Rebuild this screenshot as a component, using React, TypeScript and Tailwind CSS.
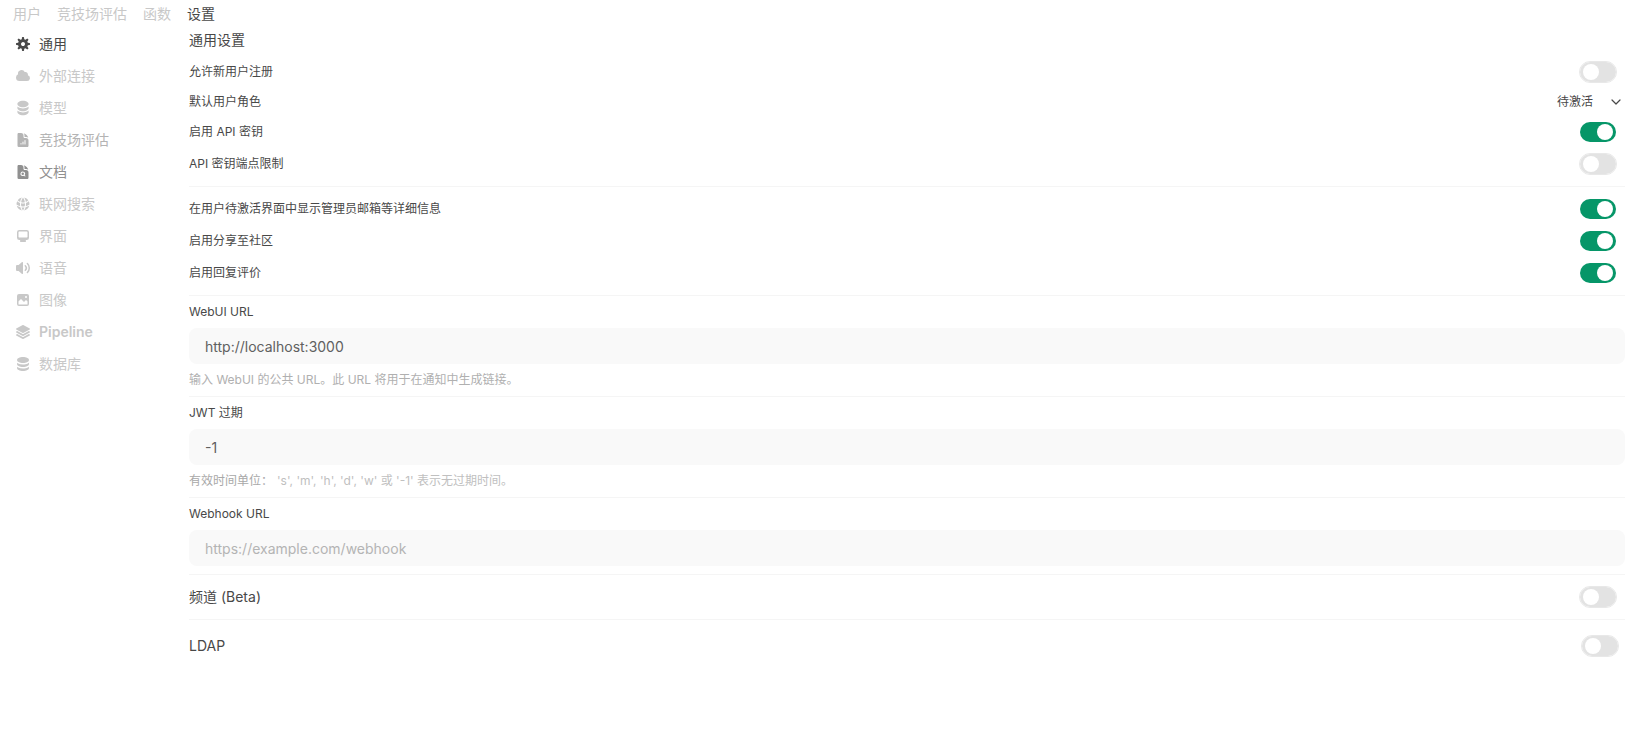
import { useState } from "react";
import type { ReactNode } from "react";
import {
  HiDocumentChartBar,
  HiDocumentMagnifyingGlass,
  HiGlobeAlt,
  HiMiniCircleStack,
  HiSquare3Stack3D,
} from "react-icons/hi2";

function Icon16({ paths }: { paths: string[] }) {
  return (
    <svg viewBox="0 0 16 16" className="h-4 w-4" fill="currentColor" aria-hidden="true">
      {paths.map((d) => (
        <path key={d} fillRule="evenodd" clipRule="evenodd" d={d} />
      ))}
    </svg>
  );
}

const cog = [
  "M6.955 1.45A.5.5 0 0 1 7.452 1h1.096a.5.5 0 0 1 .497.45l.17 1.699c.484.12.94.312 1.356.562l1.321-1.081a.5.5 0 0 1 .67.033l.774.775a.5.5 0 0 1 .034.67l-1.08 1.32c.25.417.44.873.561 1.357l1.699.17a.5.5 0 0 1 .45.497v1.096a.5.5 0 0 1-.45.497l-1.699.17c-.12.484-.312.94-.562 1.356l1.082 1.322a.5.5 0 0 1-.034.67l-.774.774a.5.5 0 0 1-.67.033l-1.322-1.08c-.416.25-.872.44-1.356.561l-.17 1.699a.5.5 0 0 1-.497.45H7.452a.5.5 0 0 1-.497-.45l-.17-1.699a4.973 4.973 0 0 1-1.356-.562L4.108 13.37a.5.5 0 0 1-.67-.033l-.774-.775a.5.5 0 0 1-.034-.67l1.08-1.32a4.971 4.971 0 0 1-.561-1.357l-1.699-.17A.5.5 0 0 1 1 8.548V7.452a.5.5 0 0 1 .45-.497l1.699-.17c.12-.484.312-.94.562-1.356L2.629 4.107a.5.5 0 0 1 .034-.67l.774-.774a.5.5 0 0 1 .67-.033L5.43 3.71a4.97 4.97 0 0 1 1.356-.561l.17-1.699ZM6 8c0 .538.212 1.026.558 1.385l.057.057a2 2 0 0 0 2.828-2.828l-.058-.056A2 2 0 0 0 6 8Z",
];
const cloud = [
  "M1 9.5A3.5 3.5 0 0 0 4.5 13H12a3 3 0 0 0 .917-5.857 2.503 2.503 0 0 0-3.198-3.019 3.5 3.5 0 0 0-6.628 2.171A3.5 3.5 0 0 0 1 9.5Z",
];
const desktop = [
  "M2 4.25A2.25 2.25 0 0 1 4.25 2h7.5A2.25 2.25 0 0 1 14 4.25v5.5A2.25 2.25 0 0 1 11.75 12h-1.312c.1.128.21.248.328.36a.75.75 0 0 1 .234.545v.345a.75.75 0 0 1-.75.75h-4.5a.75.75 0 0 1-.75-.75v-.345a.75.75 0 0 1 .234-.545c.118-.111.228-.232.328-.36H4.25A2.25 2.25 0 0 1 2 9.75v-5.5Zm2.25-.75a.75.75 0 0 0-.75.75v4.5c0 .414.336.75.75.75h7.5a.75.75 0 0 0 .75-.75v-4.5a.75.75 0 0 0-.75-.75h-7.5Z",
];
const speaker = [
  "M7.557 2.066A.75.75 0 0 1 8 2.75v10.5a.75.75 0 0 1-1.248.56L3.59 11H2a1 1 0 0 1-1-1V6a1 1 0 0 1 1-1h1.59l3.162-2.81a.75.75 0 0 1 .805-.124ZM12.95 3.05a.75.75 0 1 0-1.06 1.06 5.5 5.5 0 0 1 0 7.78.75.75 0 1 0 1.06 1.06 7 7 0 0 0 0-9.9Z",
  "M10.828 5.172a.75.75 0 1 0-1.06 1.06 2.5 2.5 0 0 1 0 3.536.75.75 0 1 0 1.06 1.06 4 4 0 0 0 0-5.656Z",
];
const photo = [
  "M2 4a2 2 0 0 1 2-2h8a2 2 0 0 1 2 2v8a2 2 0 0 1-2 2H4a2 2 0 0 1-2-2V4Zm10.5 5.707a.5.5 0 0 0-.146-.353l-1-1a.5.5 0 0 0-.708 0L9.354 9.646a.5.5 0 0 1-.708 0L6.354 7.354a.5.5 0 0 0-.708 0l-2 2a.5.5 0 0 0-.146.353V12a.5.5 0 0 0 .5.5h8a.5.5 0 0 0 .5-.5V9.707ZM12 5a1 1 0 1 1-2 0 1 1 0 0 1 2 0Z",
];
const database = [
  "M8 7c3.314 0 6-1.343 6-3s-2.686-3-6-3-6 1.343-6 3 2.686 3 6 3Z",
  "M8 8.5c1.84 0 3.579-.37 4.914-1.037A6.33 6.33 0 0 0 14 6.78V8c0 1.657-2.686 3-6 3S2 9.657 2 8V6.78c.346.273.72.5 1.087.683C4.42 8.131 6.16 8.5 8 8.5Z",
  "M8 12.5c1.84 0 3.579-.37 4.914-1.037.366-.183.74-.41 1.086-.684V12c0 1.657-2.686 3-6 3s-6-1.343-6-3v-1.22c.346.273.72.5 1.087.683C4.42 12.131 6.16 12.5 8 12.5Z",
];

const tabs = ["用户", "竞技场评估", "函数", "设置"];

const sections: { label: string; icon: ReactNode; color: string }[] = [
  { label: "通用", icon: <Icon16 paths={cog} />, color: "text-[#484848]" },
  { label: "外部连接", icon: <Icon16 paths={cloud} />, color: "text-[#c8c8c8]" },
  { label: "模型", icon: <HiMiniCircleStack className="h-4 w-4" />, color: "text-[#c8c8c8]" },
  { label: "竞技场评估", icon: <HiDocumentChartBar className="h-4 w-4" />, color: "text-[#b4b4b4]" },
  { label: "文档", icon: <HiDocumentMagnifyingGlass className="h-4 w-4" />, color: "text-[#909090]" },
  { label: "联网搜索", icon: <HiGlobeAlt className="h-4 w-4" />, color: "text-[#c8c8c8]" },
  { label: "界面", icon: <Icon16 paths={desktop} />, color: "text-[#c8c8c8]" },
  { label: "语音", icon: <Icon16 paths={speaker} />, color: "text-[#c8c8c8]" },
  { label: "图像", icon: <Icon16 paths={photo} />, color: "text-[#c8c8c8]" },
  { label: "Pipeline", icon: <HiSquare3Stack3D className="h-4 w-4" />, color: "text-[#c8c8c8] font-semibold" },
  { label: "数据库", icon: <Icon16 paths={database} />, color: "text-[#c8c8c8]" },
];

function Toggle({ id, defaultOn = false }: { id: string; defaultOn?: boolean }) {
  const [on, setOn] = useState(defaultOn);
  return (
    <span className="relative inline-flex h-5 w-9 shrink-0">
      <input
        id={id}
        type="checkbox"
        role="switch"
        checked={on}
        onChange={() => setOn(!on)}
        className="peer h-5 w-9 cursor-pointer appearance-none rounded-full bg-[#e3e3e3] outline outline-[#e8e8e8] checked:bg-[#069668] checked:outline-transparent"
      />
      <span className="pointer-events-none absolute top-[2px] left-[3px] h-4 w-4 rounded-full bg-white peer-checked:left-[17px]" />
    </span>
  );
}

function ToggleRow({ id, label, on, large }: { id: string; label: string; on?: boolean; large?: boolean }) {
  return (
    <div className="flex items-center justify-between pr-[9px]">
      <label htmlFor={id} className={large ? "text-sm" : "text-xs"}>
        {label}
      </label>
      <Toggle id={id} defaultOn={on} />
    </div>
  );
}

function TextField({
  id,
  label,
  value,
  placeholder,
  children,
}: {
  id: string;
  label: string;
  value?: string;
  placeholder?: string;
  children?: ReactNode;
}) {
  return (
    <div className="flex flex-col gap-2 py-2">
      <label htmlFor={id} className="text-xs">
        {label}
      </label>
      <input
        id={id}
        type="text"
        defaultValue={value}
        placeholder={placeholder}
        className="h-9 w-full rounded-lg bg-[#f9f9f9] px-4 text-sm text-[#606060] outline-none placeholder:text-[#b4b4b4]"
      />
      {children}
    </div>
  );
}

function Divider() {
  return <hr className="border-[#f5f5f5]" />;
}

export default function App() {
  return (
    <div className="min-h-screen bg-white font-['Inter','Noto_Sans_CJK_SC',sans-serif] text-[#484848]">
      <nav className="flex gap-4 px-[13px] pt-1 text-sm">
        {tabs.map((tab) => (
          <a key={tab} href="#" className={tab === "设置" ? "text-[#484848]" : "text-[#c8c8c8]"}>
            {tab}
          </a>
        ))}
      </nav>

      <div className="flex pr-[15px] pl-[15px]">
        <aside className="flex w-[174px] shrink-0 flex-col items-start gap-3 pt-[10px]">
          {sections.map((s) => (
            <button key={s.label} type="button" className={`flex h-5 items-center gap-2 text-sm ${s.color}`}>
              {s.icon}
              <span>{s.label}</span>
            </button>
          ))}
        </aside>

        <main className="min-w-0 flex-1 pt-[6px]">
          <h1 className="text-sm">通用设置</h1>

          <div className="flex flex-col gap-3 py-3">
            <ToggleRow id="signup" label="允许新用户注册" />
            <div className="flex h-4 items-center justify-between">
              <label htmlFor="role" className="text-xs">
                默认用户角色
              </label>
              <div className="relative flex items-center">
                <select id="role" className="appearance-none bg-transparent pr-[31px] text-xs outline-none">
                  <option>待激活</option>
                  <option>用户</option>
                  <option>管理员</option>
                </select>
                <svg
                  viewBox="0 0 10 6"
                  className="pointer-events-none absolute right-1 h-[6px] w-[10px]"
                  fill="none"
                  stroke="currentColor"
                  strokeWidth="1.2"
                >
                  <path d="M1 1l4 4 4-4" strokeLinecap="round" strokeLinejoin="round" />
                </svg>
              </div>
            </div>
            <ToggleRow id="api-key" label="启用 API 密钥" on />
            <ToggleRow id="api-key-limit" label="API 密钥端点限制" />
          </div>
          <Divider />

          <div className="flex flex-col gap-3 py-3">
            <ToggleRow id="admin-details" label="在用户待激活界面中显示管理员邮箱等详细信息" on />
            <ToggleRow id="community" label="启用分享至社区" on />
            <ToggleRow id="rating" label="启用回复评价" on />
          </div>
          <Divider />

          <TextField id="webui-url" label="WebUI URL" value="http://localhost:3000">
            <p className="text-xs text-[#b0b0b0]">输入 WebUI 的公共 URL。此 URL 将用于在通知中生成链接。</p>
          </TextField>
          <Divider />

          <TextField id="jwt" label="JWT 过期" value="-1">
            <p className="text-xs text-[#a8a8a8]">
              有效时间单位：
              <span className="ml-1 text-[#c0c0c0]">'s', 'm', 'h', 'd', 'w' 或 '-1' 表示无过期时间。</span>
            </p>
          </TextField>
          <Divider />

          <TextField id="webhook" label="Webhook URL" placeholder="https://example.com/webhook" />
          <Divider />

          <div className="py-3">
            <ToggleRow id="channels" label="频道 (Beta)" large />
          </div>
          <Divider />

          <div className="flex items-center justify-between py-4 pr-[7px]">
            <label htmlFor="ldap" className="text-sm">
              LDAP
            </label>
            <Toggle id="ldap" />
          </div>
        </main>
      </div>
    </div>
  );
}
